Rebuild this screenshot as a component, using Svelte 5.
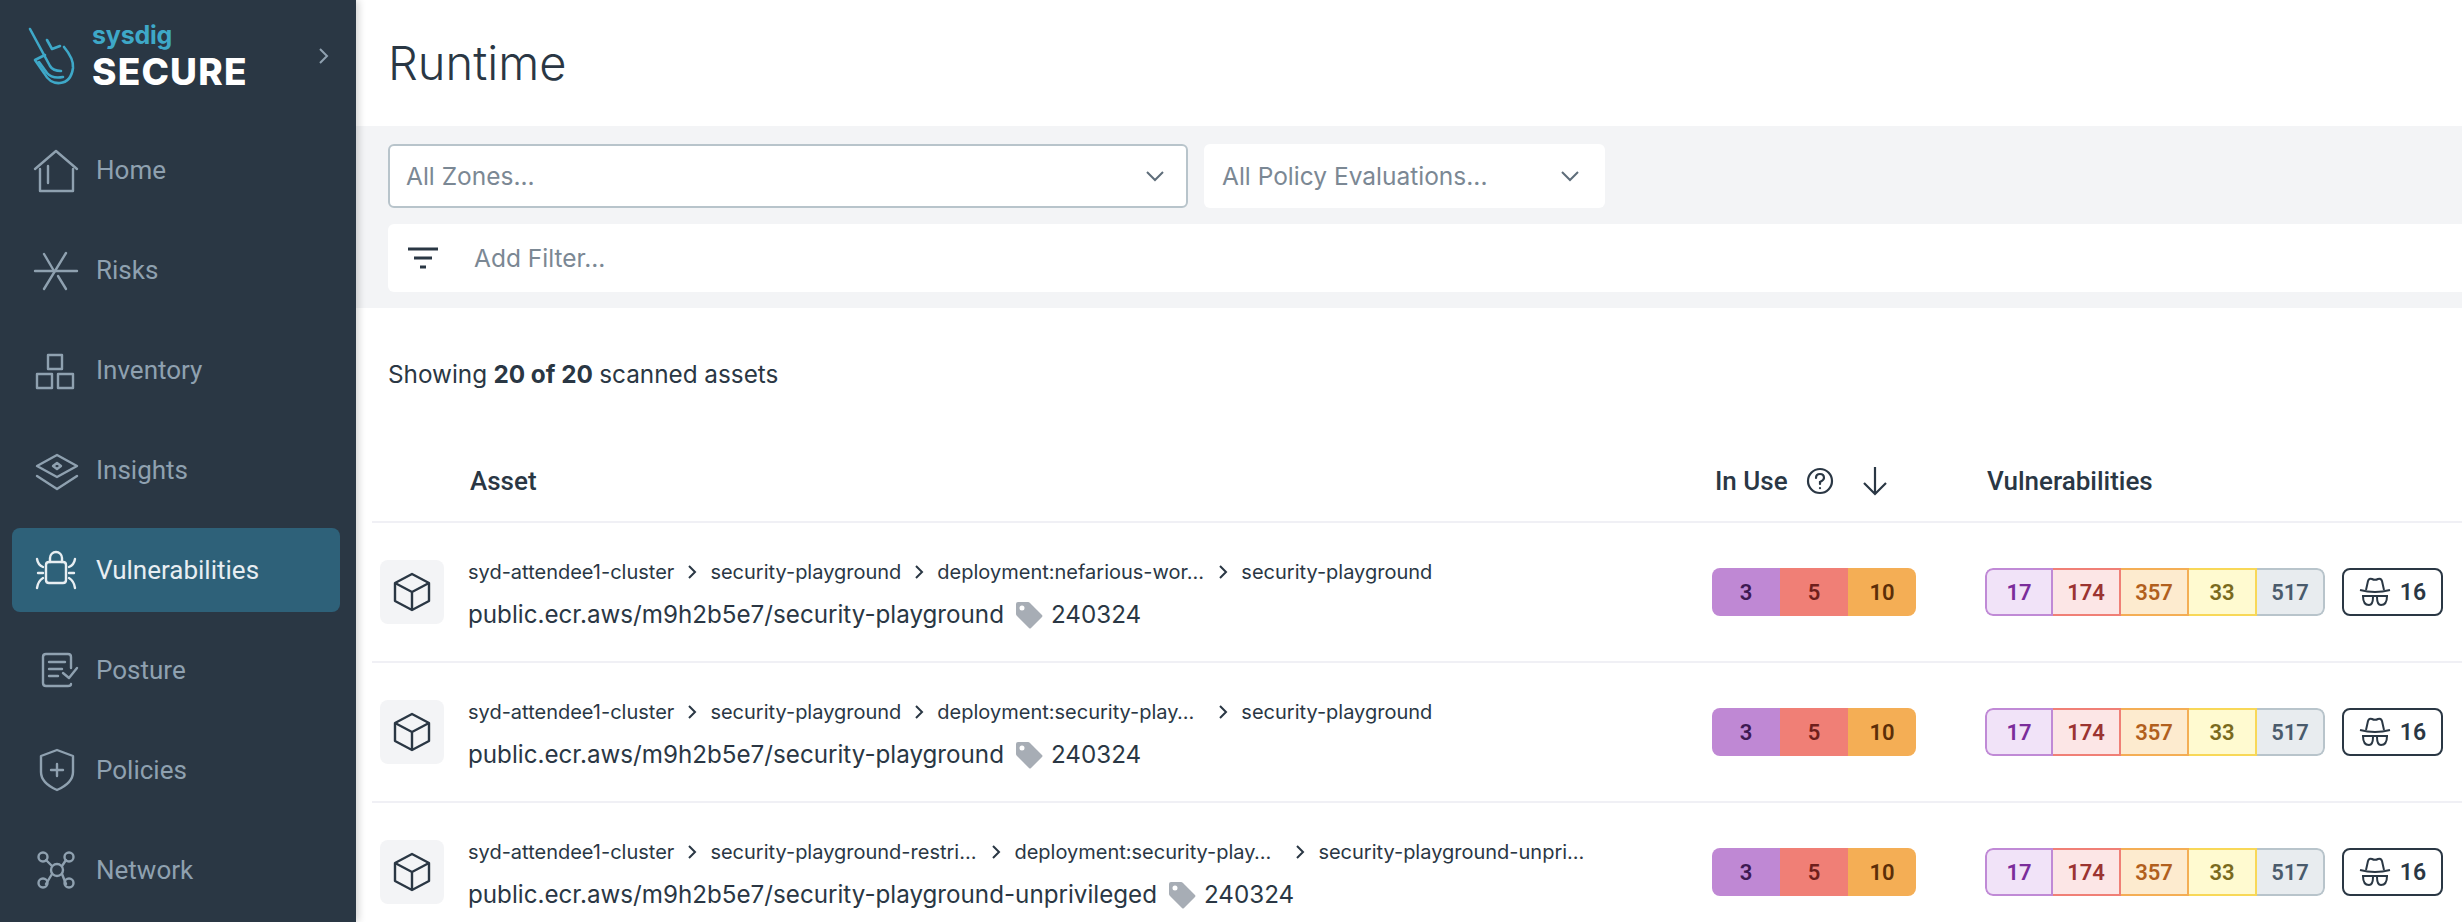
<script>
  const navItems = [
    { label: 'Home', paths: ['M3 23 L24 5 L45 23', 'M8 23 V45 H41 V23', 'M16 20 V37'] },
    { label: 'Risks', paths: ['M3 25 H45', 'M34 7 L12 43', 'M12 8 L22 25', 'M26 30 L34 43'] },
    { label: 'Inventory', paths: ['M16 9 H30 V23 H16 Z', 'M5 28 H20 V42 H5 Z', 'M26 28 H41 V42 H26 Z'] },
    { label: 'Insights', paths: ['M25 9 L45 20 L25 31 L5 20 Z', 'M25 17 L29 20 L25 23 L21 20 Z', 'M5 30 L25 43 L45 30'] },
    {
      label: 'Vulnerabilities',
      active: true,
      paths: [
        'M17 16 H31 Q34 16 34 19 V34 Q34 37 31 37 H17 Q14 37 14 34 V19 Q14 16 17 16 Z',
        'M18 16 V12 A6 6 0 0 1 30 12 V16',
        'M5 13 Q6 19 11 21',
        'M6 27 H11',
        'M5 42 Q6 35 11 32',
        'M43 13 Q42 19 37 21',
        'M37 27 H42',
        'M43 42 Q42 35 37 32'
      ]
    },
    {
      label: 'Posture',
      paths: [
        'M39 22 V11 Q39 8 36 8 H14 Q11 8 11 11 V37 Q11 40 14 40 H36 Q39 40 39 38',
        'M17 16 H33',
        'M17 23 H30',
        'M17 30 H26',
        'M31 27 L37 32 L45 22'
      ]
    },
    { label: 'Policies', paths: ['M25 4 L41 10 V26 Q41 37 25 44 Q9 37 9 26 V10 Z', 'M25 18 V30', 'M19 24 H31'] },
    {
      label: 'Network',
      paths: [
        'M25 18 A6 6 0 1 1 25 30 A6 6 0 1 1 25 18 Z',
        'M11 6.5 A4.5 4.5 0 1 1 11 15.5 A4.5 4.5 0 1 1 11 6.5 Z',
        'M37 6.5 A4.5 4.5 0 1 1 37 15.5 A4.5 4.5 0 1 1 37 6.5 Z',
        'M11 32.5 A4.5 4.5 0 1 1 11 41.5 A4.5 4.5 0 1 1 11 32.5 Z',
        'M37 32.5 A4.5 4.5 0 1 1 37 41.5 A4.5 4.5 0 1 1 37 32.5 Z',
        'M14 14 L20 20', 'M34 14 L30 20', 'M14 38 L20 28', 'M34 38 L30 28'
      ]
    }
  ];

  const assets = [
    {
      crumbs: ['syd-attendee1-cluster', 'security-playground', 'deployment:nefarious-wor…', 'security-playground'],
      image: 'public.ecr.aws/m9h2b5e7/security-playground'
    },
    {
      crumbs: ['syd-attendee1-cluster', 'security-playground', 'deployment:security-play…', 'security-playground'],
      image: 'public.ecr.aws/m9h2b5e7/security-playground'
    },
    {
      crumbs: ['syd-attendee1-cluster', 'security-playground-restri…', 'deployment:security-play…', 'security-playground-unpri…'],
      image: 'public.ecr.aws/m9h2b5e7/security-playground-unprivileged'
    }
  ];
</script>

<div class="page">
  <aside class="sidebar">
    <div class="brand">
      <svg class="logo" width="50" height="62" viewBox="28 26 50 62" fill="none" stroke="#3ea8c8" stroke-width="2.6" stroke-linecap="round" stroke-linejoin="round">
        <path d="M30 29 L50 66 Q53 71 61 71" />
        <path d="M47 40 L52 49 L60 46" />
        <path d="M64 47 Q74 59 73 68 Q71 82 60 83 Q50 84 44 73 L35 60 L45 55" />
        <path d="M39 62 L47 73 Q52 79 63 77" />
      </svg>
      <div class="brand-text">
        <span class="sysdig">sysdig</span>
        <span class="secure">SECURE</span>
      </div>
      <svg class="collapse" width="12" height="18" viewBox="0 0 12 18" fill="none" stroke="#8fa1b0" stroke-width="2">
        <path d="M2 2 L9 9 L2 16" />
      </svg>
    </div>
    <nav>
      {#each navItems as item}
        <div class="nav-item" class:active={item.active}>
          <svg width="48" height="48" viewBox="0 0 48 48" fill="none" stroke="currentColor" stroke-width="2.4" stroke-linejoin="round" stroke-linecap="round">
            {#each item.paths as d}
              <path {d} />
            {/each}
          </svg>
          <span>{item.label}</span>
        </div>
      {/each}
    </nav>
  </aside>

  <main>
    <header class="title-bar">
      <h1>Runtime</h1>
    </header>

    <section class="filters">
      <div class="select-row">
        <div class="select zones">
          <span>All Zones...</span>
          <svg width="20" height="12" viewBox="0 0 20 12" fill="none" stroke="#5e6d7a" stroke-width="2"><path d="M2 2 L10 10 L18 2" /></svg>
        </div>
        <div class="select policy">
          <span>All Policy Evaluations...</span>
          <svg width="20" height="12" viewBox="0 0 20 12" fill="none" stroke="#5e6d7a" stroke-width="2"><path d="M2 2 L10 10 L18 2" /></svg>
        </div>
      </div>
      <div class="filter-bar">
        <svg width="30" height="22" viewBox="0 0 30 22" fill="none" stroke="#2a3744" stroke-width="3">
          <path d="M0 2 H30 M6 11 H24 M12 20 H18" />
        </svg>
        <span>Add Filter...</span>
      </div>
    </section>

    <p class="showing">Showing <b>20 of 20</b> scanned assets</p>

    <div class="table">
      <div class="row head">
        <div></div>
        <div class="th asset-head">Asset</div>
        <div class="th in-use-head">
          <span>In Use</span>
          <svg class="help" width="28" height="28" viewBox="0 0 28 28" fill="none" stroke="#2a3744" stroke-width="2.2" stroke-linecap="round">
            <circle cx="14" cy="14" r="12" />
            <path d="M10 11 Q10 7 14 7 Q18 7 18 11 Q18 13 14 15 V17" />
            <path d="M14 21 V21.2" />
          </svg>
          <svg class="sort" width="26" height="30" viewBox="0 0 26 30" fill="none" stroke="#2a3744" stroke-width="2.2">
            <path d="M13 1 V28 M2 17 L13 28 L24 17" />
          </svg>
        </div>
        <div class="th vuln-head">Vulnerabilities</div>
      </div>

      {#each assets as asset}
        <div class="row">
          <div class="asset-icon">
            <svg width="40" height="40" viewBox="0 0 40 40" fill="none" stroke="#2a3744" stroke-width="2.4" stroke-linejoin="round">
              <path d="M20 2 L37 11 V29 L20 38 L3 29 V11 Z" />
              <path d="M3 11 L20 20 L37 11 M20 20 V38" />
            </svg>
          </div>
          <div class="asset">
            <div class="crumbs">
              {#each asset.crumbs as crumb, i}
                <span class="crumb" class:cut={crumb.endsWith('…')}>{crumb}</span>
                {#if i < asset.crumbs.length - 1}
                  <svg class="sep" width="10" height="14" viewBox="0 0 10 14" fill="none" stroke="#2a3744" stroke-width="2"><path d="M2 1 L8 7 L2 13" /></svg>
                {/if}
              {/each}
            </div>
            <div class="image">
              <span>{asset.image}</span>
              <svg class="tag" width="28" height="28" viewBox="0 0 28 28">
                <path fill="#a7adb5" fill-rule="evenodd" d="M3 1 H13 Q14 1 15 2 L27 14 Q28 15 27 16 L16 27 Q15 28 14 27 L2 15 Q1 14 1 13 V3 Q1 1 3 1 Z M7 4.500 A2.500 2.500 0 1 0 7 9.500 A2.500 2.500 0 1 0 7 4.500 Z" />
              </svg>
              <span>240324</span>
            </div>
          </div>
          <div class="bar solid">
            <span class="s1">3</span>
            <span class="s2">5</span>
            <span class="s3">10</span>
          </div>
          <div class="vulns">
            <div class="bar light">
              <span class="l1">17</span>
              <span class="l2">174</span>
              <span class="l3">357</span>
              <span class="l4">33</span>
              <span class="l5">517</span>
            </div>
            <div class="spy">
              <svg width="32" height="30" viewBox="0 0 32 30" fill="none" stroke="#2a3744" stroke-width="2" stroke-linejoin="round">
                <path d="M7 13 L9 4 Q10 1 13 2 Q16 3.500 19 2 Q22 1 23 4 L25 13" />
                <path d="M1 13 Q16 17 31 13" />
                <path d="M3 19 H29" />
                <path d="M4 19 Q4 28 10 28 Q14 28 14 20" />
                <path d="M18 20 Q18 28 22 28 Q28 28 28 19" />
              </svg>
              <span>16</span>
            </div>
          </div>
        </div>
      {/each}
    </div>
  </main>
</div>

<style>
  :global(body) {
    margin: 0;
    background: #fff;
    overflow: hidden;
  }

  .page {
    display: flex;
    height: 922px;
    overflow: hidden;
    font-family: Inter, "Liberation Sans", sans-serif;
    color: #2a3744;
  }

  .sidebar {
    flex: 0 0 356px;
    background: #2a3744;
    box-shadow: 2px 0 8px rgba(0, 0, 0, 0.2);
    position: relative;
    z-index: 1;
  }

  .brand {
    display: flex;
    align-items: center;
    height: 120px;
    padding-left: 28px;
  }

  .logo {
    margin-right: 14px;
    margin-bottom: 6px;
  }

  .brand-text {
    display: flex;
    flex-direction: column;
    flex: 1;
    margin-bottom: 10px;
  }

  .sysdig {
    font-weight: 700;
    font-size: 25px;
    line-height: 34px;
    letter-spacing: -0.2px;
    color: #3ea8c8;
  }

  .secure {
    font-weight: 800;
    font-size: 37px;
    line-height: 40px;
    letter-spacing: 1.2px;
    color: #fff;
  }

  .collapse {
    margin-right: 26px;
    margin-bottom: 8px;
  }

  nav {
    display: flex;
    flex-direction: column;
    gap: 16px;
    padding: 8px 16px 0 12px;
  }

  .nav-item {
    display: flex;
    align-items: center;
    flex: 0 0 84px;
    gap: 16px;
    padding-left: 20px;
    border-radius: 8px;
    color: #8fa1b0;
    font-family: Roboto, sans-serif;
    font-size: 26px;
  }

  .nav-item.active {
    background: #2e6179;
    color: #e8eef2;
  }

  main {
    flex: 1;
    min-width: 0;
  }

  .title-bar {
    height: 126px;
    display: flex;
    align-items: center;
    padding: 0 0 2px 32px;
    box-sizing: border-box;
  }

  h1 {
    margin: 0;
    font-size: 47px;
    font-weight: 300;
  }

  .filters {
    height: 182px;
    box-sizing: border-box;
    padding: 18px 0 16px 32px;
    background: #f3f4f6;
    display: flex;
    flex-direction: column;
    gap: 16px;
  }

  .select-row {
    display: flex;
    gap: 16px;
  }

  .select {
    height: 64px;
    box-sizing: border-box;
    display: flex;
    align-items: center;
    justify-content: space-between;
    background: #fff;
    border-radius: 6px;
    font-size: 24.5px;
    color: #7b8894;
  }

  .zones {
    width: 800px;
    border: 2px solid #b8c4cb;
    padding: 0 21px 0 16px;
  }

  .policy {
    width: 401px;
    padding: 0 25px 0 18px;
  }

  .filter-bar {
    height: 68px;
    display: flex;
    align-items: center;
    gap: 36px;
    padding-left: 20px;
    background: #fff;
    border-radius: 6px 0 0 6px;
    font-size: 24.5px;
    color: #7b8894;
  }

  .showing {
    margin: 0;
    height: 134px;
    box-sizing: border-box;
    padding: 0 0 2px 32px;
    display: flex;
    align-items: center;
    gap: 0.26em;
    font-size: 24.3px;
  }

  .showing b {
    font-weight: 700;
  }

  .table {
    margin-left: 16px;
  }

  .row {
    display: grid;
    grid-template-columns: 96px 1244px 273px 1fr;
    align-items: center;
    height: 140px;
    box-sizing: border-box;
    border-bottom: 2px solid #f0f0f5;
  }

  .row.head {
    height: 81px;
    align-items: start;
    padding-top: 24px;
  }

  .th {
    font-family: Roboto, sans-serif;
    font-weight: 500;
    font-size: 26px;
    line-height: 30px;
  }

  .asset-head,
  .vuln-head {
    padding-left: 2px;
  }

  .in-use-head {
    display: flex;
    align-items: center;
    padding-left: 3px;
  }

  .help {
    margin-left: 18px;
  }

  .sort {
    margin-left: 28px;
  }

  .asset-icon {
    margin-left: 8px;
    width: 64px;
    height: 64px;
    border-radius: 8px;
    background: #f3f4f6;
    display: flex;
    align-items: center;
    justify-content: center;
  }

  .asset {
    display: flex;
    flex-direction: column;
    gap: 12px;
    padding-top: 4px;
  }

  .crumbs {
    display: flex;
    align-items: center;
    font-size: 20px;
    line-height: 30px;
  }

  .crumb {
    white-space: nowrap;
  }

  .crumb.cut {
    width: 268px;
  }

  .sep {
    margin: 0 13px;
  }

  .image {
    display: flex;
    align-items: center;
    gap: 11px;
    font-size: 24.2px;
    line-height: 32px;
  }

  .tag {
    margin-right: -3px;
  }

  .bar {
    display: flex;
    width: max-content;
    height: 48px;
    box-sizing: border-box;
    border-radius: 8px;
    overflow: hidden;
    font-family: Roboto, sans-serif;
    font-weight: 600;
    font-size: 22px;
  }

  .bar span {
    width: 68px;
    box-sizing: border-box;
    display: flex;
    align-items: center;
    justify-content: center;
  }

  .light span {
    border-style: solid;
    border-width: 2px 2px 2px 0;
  }

  .light span:first-child {
    border-left-width: 2px;
    border-radius: 8px 0 0 8px;
  }

  .light span:last-child {
    border-radius: 0 8px 8px 0;
  }

  .s1 { background: #bf88d4; color: #3d1a52; }
  .s2 { background: #f07f76; color: #6f1f1c; }
  .s3 { background: #f4ae55; color: #5c2e08; }

  .l1 { background: #f1e3f8; color: #7b2d9b; border-color: #c08ad6; }
  .l2 { background: #fce6e6; color: #9b3431; border-color: #f07f76; }
  .l3 { background: #fdebcf; color: #b15f1e; border-color: #f4ae55; }
  .l4 { background: #fffad0; color: #7a6a1d; border-color: #f8d858; }
  .l5 { background: #e8ecef; color: #4a5b6c; border-color: #b8c4cb; }

  .vulns {
    display: flex;
    align-items: center;
    gap: 17px;
  }

  .spy {
    width: 101px;
    height: 48px;
    box-sizing: border-box;
    border: 2px solid #2a3744;
    border-radius: 8px;
    display: flex;
    align-items: center;
    justify-content: center;
    gap: 9px;
    font-family: Roboto, sans-serif;
    font-weight: 600;
    font-size: 23px;
  }
</style>
